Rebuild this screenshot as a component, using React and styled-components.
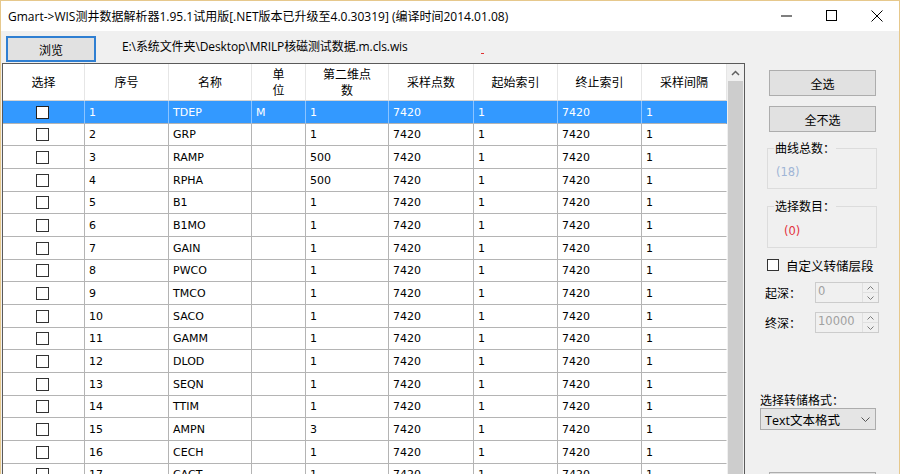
import React from "react";
import styled, { createGlobalStyle } from "styled-components";

const Global = createGlobalStyle`
  html, body { margin: 0; padding: 0; background: #f0f0f0; }
  body { font-family: "Open Sans", "Noto Sans CJK SC", sans-serif; }
  * { box-sizing: border-box; }
`;

const Win = styled.div`
  width: 900px;
  height: 474px;
  overflow: hidden;
  display: flex;
  flex-direction: column;
  background: #f0f0f0;
  border-top: 1px solid #e6c88c;
  border-left: 1px solid #e6c88c;
  border-right: 1px solid #e6c88c;
`;

const TitleBar = styled.div`
  height: 30px;
  flex: none;
  background: #ffffff;
  display: flex;
  align-items: center;
  padding-left: 7px;
`;

const Title = styled.div`
  flex: 1;
  font-family: "Open Sans", "Noto Sans CJK SC", sans-serif;
  font-size: 12px;
  color: #000;
  white-space: nowrap;
`;

const Controls = styled.div`
  display: flex;
  height: 100%;
`;

const CtrlBtn = styled.div`
  width: 45px;
  height: 100%;
  display: flex;
  align-items: center;
  justify-content: center;
`;

const Toolbar = styled.div`
  flex: none;
  height: 32px;
  display: flex;
  align-items: flex-start;
  padding: 5px 0 0 5px;
`;

const BrowseButton = styled.div`
  width: 90px;
  height: 26px;
  background: #e1e1e1;
  border: 2px solid #2f7fd2;
  display: flex;
  align-items: center;
  justify-content: center;
  font-family: "Noto Sans CJK SC", sans-serif;
  font-size: 12px;
  color: #000;
`;

const PathText = styled.div`
  margin-left: 26px;
  line-height: 22px;
  font-family: "Open Sans", "Noto Sans CJK SC", sans-serif;
  font-size: 12px;
  color: #000;
  white-space: nowrap;
  letter-spacing: -0.1px;
`;

const RedMark = styled.div`
  width: 3px;
  height: 1px;
  background: #e03030;
  margin: 17px 0 0 73px;
`;

const Main = styled.div`
  flex: 1;
  min-height: 0;
  display: flex;
  align-items: flex-start;
  overflow: hidden;
`;

const TableFrame = styled.div`
  flex: none;
  margin-left: 1px;
  width: 743px;
  border: 1px solid #5a5a5a;
  background: #ffffff;
  display: flex;
`;

const Grid = styled.div`
  width: 724px;
  display: grid;
  grid-template-columns: 82px 84px 83px 54px 83px 85px 84px 84px 85px;
  grid-auto-rows: 22.67px;
  grid-template-rows: 37px;
  font-family: "DejaVu Sans", "Noto Sans CJK SC", sans-serif;
  font-size: 11px;
`;

const HeadCell = styled.div`
  background: #fff;
  border-right: 1px solid #e6e6e6;
  border-bottom: 1px solid #d4d4d4;
  display: flex;
  flex-direction: column;
  align-items: center;
  justify-content: center;
  text-align: center;
  font-family: "Noto Sans CJK SC", sans-serif;
  font-size: 12px;
  line-height: 16px;
  color: #000;
  &:last-child { border-right: none; }
`;

const HeadLine = styled.span`
  display: block;
  height: 16px;
  overflow: visible;
`;

const Cell = styled.div`
  background: ${(p) => (p.$sel ? "#3399ff" : "#ffffff")};
  color: ${(p) => (p.$sel ? "#ffffff" : "#000000")};
  border-right: 1px solid ${(p) => (p.$last ? "transparent" : p.$sel ? "#8cc4ff" : "#b4b4b4")};
  border-bottom: 1px solid #b4b4b4;
  display: flex;
  align-items: center;
  justify-content: ${(p) => (p.$center ? "center" : "flex-start")};
  padding-left: ${(p) => (p.$center ? "0" : "4px")};
  padding-top: 1px;
  white-space: nowrap;
`;

const Box = styled.div`
  width: ${(p) => p.$size || 13}px;
  height: ${(p) => p.$size || 13}px;
  background: #fff;
  border: 1px solid ${(p) => (p.$sel ? "#222" : "#333")};
  margin-left: ${(p) => p.$ml || 0}px;
  flex: none;
`;

const Scrollbar = styled.div`
  width: 17px;
  align-self: stretch;
  background: #f0f0f0;
  display: flex;
  flex-direction: column;
`;

const ScrollArrow = styled.div`
  height: 17px;
  display: flex;
  align-items: center;
  justify-content: center;
`;

const ScrollThumb = styled.div`
  flex: 1;
  margin: 0 1px;
  background: #cdcdcd;
`;

const Side = styled.div`
  flex: 1;
  display: flex;
  flex-direction: column;
  align-items: flex-start;
  padding-left: 15px;
  font-family: "Noto Sans CJK SC", sans-serif;
  font-size: 12px;
  color: #000;
`;

const PushButton = styled.div`
  width: 107px;
  height: 26px;
  margin: ${(p) => p.$mt}px 0 0 9px;
  background: #e1e1e1;
  border: 1px solid #adadad;
  display: flex;
  align-items: center;
  justify-content: center;
  flex: none;
`;

const Group = styled.fieldset`
  margin: ${(p) => p.$mt}px 0 0 7px;
  width: 110px;
  height: ${(p) => p.$h}px;
  border: 1px solid #dcdcdc;
  padding: 0 0 0 8px;
  min-width: 0;
  flex: none;
`;

const Legend = styled.legend`
  padding: 0 1px;
  margin-left: -2px;
  font-size: 12px;
  line-height: 16px;
`;

const Count = styled.div`
  margin-top: ${(p) => p.$mt}px;
  margin-left: ${(p) => p.$ml}px;
  font-family: "DejaVu Sans", sans-serif;
  font-size: 11.5px;
  color: ${(p) => p.$color};
`;

const CheckRow = styled.div`
  margin: 10px 0 0 7px;
  display: flex;
  align-items: center;
  gap: 7px;
  height: 14px;
  font-size: 12.5px;
`;

const DepthRow = styled.div`
  margin: ${(p) => p.$mt}px 0 0 5px;
  display: flex;
  align-items: center;
  width: 114px;
  justify-content: space-between;
`;

const Spin = styled.div`
  width: 64px;
  height: 21px;
  border: 1px solid #cccccc;
  background: #f0f0f0;
  display: flex;
`;

const SpinValue = styled.div`
  flex: 1;
  padding-left: 2px;
  font-family: "DejaVu Sans", sans-serif;
  font-size: 11.5px;
  line-height: 16px;
  color: #a0a0a0;
`;

const SpinBtns = styled.div`
  width: 16px;
  display: flex;
  flex-direction: column;
  border-left: 1px solid #e0e0e0;
`;

const SpinBtn = styled.div`
  flex: 1;
  display: flex;
  align-items: center;
  justify-content: center;
  border-top: ${(p) => (p.$bottom ? "1px solid #e0e0e0" : "none")};
`;

const FormatLabel = styled.div`
  margin-top: 60px;
  line-height: 14px;
`;

const Select = styled.div`
  margin-top: 1px;
  width: 116px;
  height: 22px;
  background: #e5e5e5;
  border: 1px solid #acacac;
  display: flex;
  align-items: center;
  justify-content: space-between;
  padding: 0 5px 0 4px;
  font-family: "Open Sans", "Noto Sans CJK SC", sans-serif;
  font-size: 12.5px;
`;

const rows = [
  ["1", "TDEP", "M", "1"],
  ["2", "GRP", "", "1"],
  ["3", "RAMP", "", "500"],
  ["4", "RPHA", "", "500"],
  ["5", "B1", "", "1"],
  ["6", "B1MO", "", "1"],
  ["7", "GAIN", "", "1"],
  ["8", "PWCO", "", "1"],
  ["9", "TMCO", "", "1"],
  ["10", "SACO", "", "1"],
  ["11", "GAMM", "", "1"],
  ["12", "DLOD", "", "1"],
  ["13", "SEQN", "", "1"],
  ["14", "TTIM", "", "1"],
  ["15", "AMPN", "", "3"],
  ["16", "CECH", "", "1"],
  ["17", "CACT", "", "1"],
  ["18", "CSTA", "", "1"],
];

const headers = [
  ["选择"],
  ["序号"],
  ["名称"],
  ["单", "位"],
  ["第二维点", "数"],
  ["采样点数"],
  ["起始索引"],
  ["终止索引"],
  ["采样间隔"],
];

const Up = () => (
  <svg width="7" height="4" viewBox="0 0 7 4"><path d="M0.5 3.5 L3.5 0.5 L6.5 3.5" fill="none" stroke="#7a7a7a" strokeWidth="1" /></svg>
);
const Down = () => (
  <svg width="7" height="4" viewBox="0 0 7 4"><path d="M0.5 0.5 L3.5 3.5 L6.5 0.5" fill="none" stroke="#7a7a7a" strokeWidth="1" /></svg>
);

export default function App() {
  return (
    <>
      <Global />
      <Win>
        <TitleBar>
          <Title>Gmart-&gt;WIS测井数据解析器1.95.1试用版[.NET版本已升级至4.0.30319] (编译时间2014.01.08)</Title>
          <Controls>
            <CtrlBtn>
              <svg width="12" height="2" viewBox="0 0 12 2"><rect x="0" y="0.5" width="11" height="1" fill="#000" /></svg>
            </CtrlBtn>
            <CtrlBtn>
              <svg width="12" height="12" viewBox="0 0 12 12"><rect x="0.5" y="0.5" width="10" height="10" fill="none" stroke="#000" strokeWidth="1" /></svg>
            </CtrlBtn>
            <CtrlBtn>
              <svg width="12" height="12" viewBox="0 0 12 12"><path d="M0.5 0.5 L11.5 11.5 M11.5 0.5 L0.5 11.5" stroke="#000" strokeWidth="1" /></svg>
            </CtrlBtn>
          </Controls>
        </TitleBar>
        <Toolbar>
          <BrowseButton>浏览</BrowseButton>
          <PathText>E:\系统文件夹\Desktop\MRILP核磁测试数据.m.cls.wis</PathText>
          <RedMark />
        </Toolbar>
        <Main>
          <TableFrame>
            <Grid>
              {headers.map((h, i) => (
                <HeadCell key={"h" + i}>
                  {h.map((line, li) => (
                    <HeadLine key={li}>{line}</HeadLine>
                  ))}
                </HeadCell>
              ))}
              {rows.map((r, ri) => {
                const sel = ri === 0;
                const vals = [r[0], r[1], r[2], r[3], "7420", "1", "7420", "1"];
                return (
                  <React.Fragment key={ri}>
                    <Cell $sel={sel} $center>
                      <Box $sel={sel} $ml={-2} />
                    </Cell>
                    {vals.map((v, ci) => (
                      <Cell key={ci} $sel={sel} $last={ci === vals.length - 1}>{v}</Cell>
                    ))}
                  </React.Fragment>
                );
              })}
            </Grid>
            <Scrollbar>
              <ScrollArrow>
                <svg width="9" height="6" viewBox="0 0 9 6"><path d="M1 5 L4.5 1.5 L8 5" fill="none" stroke="#606060" strokeWidth="1.5" /></svg>
              </ScrollArrow>
              <ScrollThumb />
            </Scrollbar>
          </TableFrame>
          <Side>
            <PushButton $mt={7}>全选</PushButton>
            <PushButton $mt={10}>全不选</PushButton>
            <Group $mt={8} $h={49}>
              <Legend>曲线总数：</Legend>
              <Count $mt={9} $ml={0} $color="#9fb5d6">(18)</Count>
            </Group>
            <Group $mt={9} $h={50}>
              <Legend>选择数目：</Legend>
              <Count $mt={10} $ml={8} $color="#e3303c">(0)</Count>
            </Group>
            <CheckRow>
              <Box $size={12} />
              自定义转储层段
            </CheckRow>
            <DepthRow $mt={10}>
              起深：
              <Spin>
                <SpinValue>0</SpinValue>
                <SpinBtns>
                  <SpinBtn><Up /></SpinBtn>
                  <SpinBtn $bottom><Down /></SpinBtn>
                </SpinBtns>
              </Spin>
            </DepthRow>
            <DepthRow $mt={9}>
              终深：
              <Spin>
                <SpinValue>10000</SpinValue>
                <SpinBtns>
                  <SpinBtn><Up /></SpinBtn>
                  <SpinBtn $bottom><Down /></SpinBtn>
                </SpinBtns>
              </Spin>
            </DepthRow>
            <FormatLabel>选择转储格式：</FormatLabel>
            <Select>
              <span>Text文本格式</span>
              <svg width="9" height="5" viewBox="0 0 9 5"><path d="M0.5 0.5 L4.5 4.5 L8.5 0.5" fill="none" stroke="#555" strokeWidth="1" /></svg>
            </Select>
            <PushButton $mt={42}>转储</PushButton>
          </Side>
        </Main>
      </Win>
    </>
  );
}
